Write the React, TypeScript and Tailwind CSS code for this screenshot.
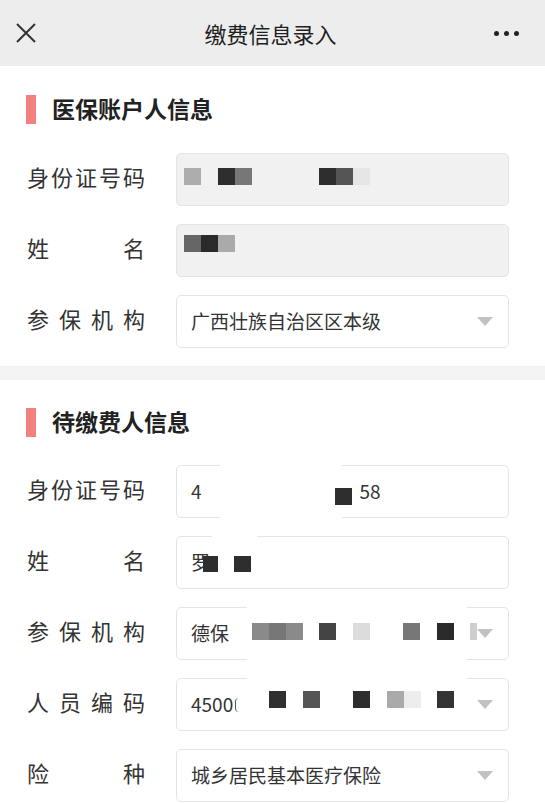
import React from "react";

const FONT = { fontFamily: '"Noto Sans CJK SC", "Noto Sans", sans-serif' };

type Block = { l: number; c: string; w?: number };

function Label({ text }: { text: string }) {
  const chars = text.split("");
  return (
    <div className="flex w-[118px] shrink-0 justify-between pb-[7px] text-[22px] leading-none text-[#333]">
      {chars.map((ch, i) => (
        <span key={i}>{ch}</span>
      ))}
    </div>
  );
}

function Triangle() {
  return (
    <svg width="16" height="10" viewBox="0 0 16 10" className="shrink-0">
      <path d="M0 0 L16 0 L8 9 Z" fill="#c2c2c2" />
    </svg>
  );
}

function Mosaic({ top, blocks, h = 17 }: { top: number; blocks: Block[]; h?: number }) {
  return (
    <>
      {blocks.map((b, i) => (
        <div
          key={i}
          className="absolute z-20"
          style={{ left: b.l, top, width: b.w ?? 17, height: h, background: b.c }}
        />
      ))}
    </>
  );
}

function Row({
  label,
  disabled,
  select,
  children,
}: {
  label: string;
  disabled?: boolean;
  select?: boolean;
  children?: React.ReactNode;
}) {
  return (
    <div className="flex items-center pl-[27px]">
      <Label text={label} />
      <div
        className={
          "relative ml-[31px] flex h-[53px] w-[333px] items-center justify-between rounded-[5px] border border-[#e4e4e4] pl-[14px] pr-[15px] text-[19px] text-[#333] " +
          (disabled ? "bg-[#f1f1f1]" : "bg-white")
        }
      >
        {children}
        {select ? <Triangle /> : null}
      </div>
    </div>
  );
}

function Title({ text }: { text: string }) {
  return (
    <div className="flex h-[29px] items-center pl-[26px]">
      <div className="h-[29px] w-[10px] bg-[#f47f7f]" />
      <div className="ml-[16px] pb-[3px] text-[23px] font-bold leading-none text-[#222]">{text}</div>
    </div>
  );
}

export default function App() {
  return (
    <div className="min-h-[803px] w-[545px] bg-white" style={FONT}>
      {/* header */}
      <div className="flex h-[66px] items-center justify-between bg-[#ededed] pl-[15px] pr-[26px]">
        <svg width="22" height="22" viewBox="0 0 22 22">
          <path d="M2 2 L20 20 M20 2 L2 20" stroke="#333" strokeWidth="2" fill="none" />
        </svg>
        <div className="pl-[10px] text-[22px] leading-none text-[#1f1f1f]">缴费信息录入</div>
        <div className="flex items-center gap-[5px]">
          <span className="h-[5px] w-[5px] rounded-full bg-[#222]" />
          <span className="h-[5px] w-[5px] rounded-full bg-[#222]" />
          <span className="h-[5px] w-[5px] rounded-full bg-[#222]" />
        </div>
      </div>

      {/* section 1 */}
      <div className="flex flex-col pb-[18px] pt-[29px]">
        <Title text="医保账户人信息" />
        <div className="mt-[29px] flex flex-col gap-[18px]">
          <Row label="身份证号码" disabled>
            <Mosaic
              top={14}
              blocks={[
                { l: 7, c: "#adadad" },
                { l: 41, c: "#2e2e2e" },
                { l: 58, c: "#777" },
                { l: 142, c: "#2e2e2e" },
                { l: 159, c: "#555" },
                { l: 176, c: "#e6e6e6" },
              ]}
            />
          </Row>
          <Row label="姓名" disabled>
            <Mosaic
              top={10}
              blocks={[
                { l: 7, c: "#666" },
                { l: 24, c: "#2a2a2a" },
                { l: 41, c: "#aaa" },
              ]}
            />
          </Row>
          <Row label="参保机构" select>
            <span>广西壮族自治区区本级</span>
          </Row>
        </div>
      </div>

      <div className="h-[14px] bg-[#f4f4f4]" />

      {/* section 2 */}
      <div className="relative flex flex-col pt-[28px]">
        <Title text="待缴费人信息" />
        <div className="mt-[28px] flex flex-col gap-[18px]">
          <Row label="身份证号码">
            <div className="flex items-center">
              <span>4</span>
              <span className="ml-[158px]">58</span>
            </div>
            <Mosaic top={22} blocks={[{ l: 158, c: "#2e2e2e" }]} />
          </Row>
          <Row label="姓名">
            <span>罗</span>
            <Mosaic
              top={19}
              h={16}
              blocks={[
                { l: 26, c: "#2e2e2e", w: 15 },
                { l: 57, c: "#2e2e2e" },
              ]}
            />
          </Row>
          <Row label="参保机构" select>
            <span>德保</span>
            <Mosaic
              top={15}
              blocks={[
                { l: 75, c: "#8a8a8a" },
                { l: 92, c: "#777" },
                { l: 109, c: "#8a8a8a" },
                { l: 142, c: "#444" },
                { l: 176, c: "#dcdcdc" },
                { l: 226, c: "#777" },
                { l: 260, c: "#2a2a2a" },
                { l: 293, c: "#cfcfcf", w: 7 },
              ]}
            />
          </Row>
          <Row label="人员编码" select>
            <span className="flex items-center">
              <span>4500</span>
              <span className="ml-[2px] h-[14px] w-[4px] rounded-l-full border-l-[1.5px] border-[#555]" />
            </span>
            <Mosaic
              top={12}
              blocks={[
                { l: 92, c: "#303030" },
                { l: 126, c: "#555" },
                { l: 176, c: "#2e2e2e" },
                { l: 210, c: "#aaa" },
                { l: 227, c: "#ededed" },
                { l: 260, c: "#333" },
              ]}
            />
          </Row>
          <Row label="险种" select>
            <span>城乡居民基本医疗保险</span>
          </Row>
        </div>

        {/* white censor patches over borders */}
        <div className="absolute left-[220px] top-[80px] z-10 h-[65px] w-[122px] bg-white" />
        <div className="absolute left-[212px] top-[145px] z-10 h-[20px] w-[45px] bg-white" />
        <div className="absolute left-[247px] top-[223px] z-10 h-[80px] w-[220px] bg-white" />
      </div>
    </div>
  );
}
